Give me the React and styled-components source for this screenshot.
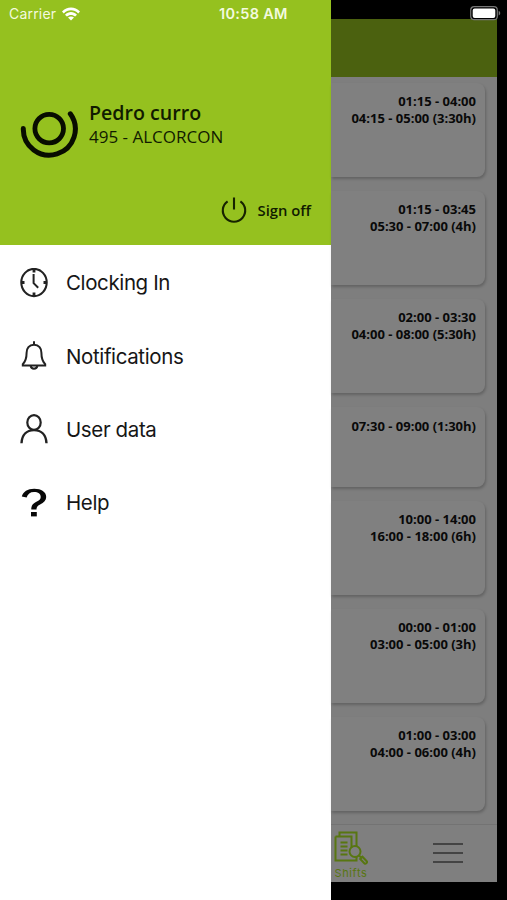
import styled, { createGlobalStyle } from 'styled-components'

const shifts = [
    { times: ['01:15 - 04:00', '04:15 - 05:00 (3:30h)'] },
    { times: ['01:15 - 03:45', '05:30 - 07:00 (4h)'] },
    { times: ['02:00 - 03:30', '04:00 - 08:00 (5:30h)'] },
    { times: ['07:30 - 09:00 (1:30h)'] },
    { times: ['10:00 - 14:00', '16:00 - 18:00 (6h)'] },
    { times: ['00:00 - 01:00', '03:00 - 05:00 (3h)'] },
    { times: ['01:00 - 03:00', '04:00 - 06:00 (4h)'] },
]

const ClockIcon = () => (
    <Icon $size={30} viewBox="0 0 30 30">
        <ellipse cx="15" cy="14.5" rx="12.7" ry="13.6" strokeWidth="2.1" />
        <path d="M14.6 6v9.2l4.600 4.600" strokeWidth="2" />
        <path d="M15 1.500v3M15 24.500v3M2.500 14.500h3M24.500 14.500h3" strokeWidth="2.800" />
    </Icon>
)

const BellIcon = () => (
    <Icon $size={30} viewBox="0 0 30 30">
        <path
            d="M15 3.800C10 3.800 7.600 7.400 7.600 11.700c0 6.300-1 8.600-3.800 11.400v1.500h22.400v-1.500c-2.800-2.800-3.800-5.100-3.800-11.400 0-4.300-2.400-7.900-7.400-7.900z"
            strokeWidth="2"
        />
        <path d="M15 .2v3.600M11.700 25c.5 3.500 6.100 3.500 6.600 0" strokeWidth="2" />
    </Icon>
)

const UserIcon = () => (
    <Icon $size={30} viewBox="0 0 30 30">
        <ellipse cx="15" cy="8.500" rx="6.700" ry="7.400" strokeWidth="2.200" />
        <path d="M2.500 29.300c.4-8.200 5-13.200 12.500-13.200s12.100 5 12.500 13.200" strokeWidth="2.400" />
    </Icon>
)

const HelpIcon = () => (
    <Icon $size={30} viewBox="0 0 30 30">
        <path
            d="M2.800 8.600C4.200 3.600 8.500.8 15.200.8c7.200 0 12 3.300 12 8.200 0 3.300-2.300 5.700-6.100 7.600-2.900 1.500-3.600 2.600-3.600 4.900h-5.200c0-4 1.500-5.900 5.100-7.800 2.900-1.500 4.300-2.600 4.300-4.800 0-3-2.500-4.900-6.700-4.900-3.900 0-6.300 1.900-7.400 5.600z"
            fill="#080808"
            stroke="none"
        />
        <path d="M12 24h5.800v4.400h-5.800z" fill="#080808" stroke="none" />
    </Icon>
)

const menu = [
    { label: 'Clocking In', icon: <ClockIcon /> },
    { label: 'Notifications', icon: <BellIcon /> },
    { label: 'User data', icon: <UserIcon /> },
    { label: 'Help', icon: <HelpIcon /> },
]

const StatusBar = () => (
    <StatusRow>
        <Carrier>Carrier</Carrier>
        <Wifi viewBox="0 0 18 13.400">
            <path d="M0 4.300C5-1.100 13-1.100 18 4.300L16.200 6.200C12.200 2 5.800 2 1.800 6.200z" />
            <path d="M3 7.400c3.400-3.600 8.600-3.600 12 0l-1.900 1.900C10.800 7 7.200 7 4.900 9.300z" />
            <path d="M6 10.300c1.700-1.600 4.300-1.600 6 0L9 13.300z" />
        </Wifi>
        <Time>10:58 AM</Time>
        <Battery viewBox="0 0 31 15">
            <rect x=".7" y=".7" width="26.600" height="13" rx="3.500" fill="#000" stroke="#777" strokeWidth="1.200" />
            <rect x="2.700" y="2.500" width="22.600" height="9.400" rx="2" fill="#fff" />
            <path d="M28.700 5v4.400c2-.6 2-3.800 0-4.400z" fill="#777" />
        </Battery>
    </StatusRow>
)

const Drawer = () => (
    <DrawerPanel>
        <Profile>
            <User>
                <Avatar viewBox="0 0 60 56">
                    <circle cx="29.200" cy="25.600" r="14.300" strokeWidth="4.800" />
                    <path d="M3.300 25.600A26 26 0 1 0 50.300 10.800" strokeWidth="5" />
                </Avatar>
                <UserText>
                    <UserName>Pedro curro</UserName>
                    <UserSite>495 - ALCORCON</UserSite>
                </UserText>
            </User>
            <SignOff>
                <Icon $size={26} viewBox="0 0 26 26">
                    <path d="M6.600 4.300a11.200 11.200 0 1 0 12.800 0M13 .5v12" stroke="#172300" strokeWidth="2.100" />
                </Icon>
                Sign off
            </SignOff>
        </Profile>
        <Menu>
            {menu.map((item) => (
                <MenuItem key={item.label}>
                    {item.icon}
                    {item.label}
                </MenuItem>
            ))}
        </Menu>
    </DrawerPanel>
)

const App = () => {
    return (
        <>
            <GlobalStyle />
            <Phone>
                <Drawer />
                <Screen>
                    <Header />
                    <ShiftList>
                        {shifts.map((shift, index) => (
                            <ShiftCard key={index} $short={shift.times.length === 1}>
                                {shift.times.map((time) => (
                                    <ShiftTime key={time}>{time}</ShiftTime>
                                ))}
                            </ShiftCard>
                        ))}
                    </ShiftList>
                    <TabBar>
                        <ShiftsTab>
                            <ShiftsIcon viewBox="0 0 34 34">
                                <path d="M5.500 5V1.500h17v14M1.500 5.500h16v11M1.500 5.500v24h17M22.500 26v3.500h-4" />
                                <path d="M6.500 11.500h7M6.500 15.500h7M6.500 19.500h7M6.500 23.500h7" strokeWidth="1.900" />
                                <circle cx="21" cy="20.500" r="5.500" />
                                <path d="M25 24.500l2.300 2.300M26.200 28l2.300-2.300 4.200 4.500c1 1.200-1 3.200-2.200 2.200z" />
                            </ShiftsIcon>
                            Shifts
                        </ShiftsTab>
                        <Burger>
                            <BurgerLine />
                            <BurgerLine />
                            <BurgerLine />
                        </Burger>
                    </TabBar>
                </Screen>
                <StatusBar />
            </Phone>
        </>
    )
}

export default App

const GlobalStyle = createGlobalStyle`
    * {
        box-sizing: border-box;
    }
    body {
        margin: 0;
        background: #000;
    }
`
const Phone = styled.div`
    position: relative;
    display: flex;
    width: 507px;
    height: 900px;
    overflow: hidden;
    background: #000;
    font-family: 'Open Sans', sans-serif;
`
const StatusRow = styled.div`
    position: absolute;
    top: 0;
    left: 0;
    width: 100%;
    height: 27px;
    display: flex;
    align-items: center;
    padding: 0 6px 0 9px;
    font-family: Inter, sans-serif;
    font-size: 14px;
    color: #f3fadf;
`
const Carrier = styled.span`
    width: 53px;
    letter-spacing: 0.2px;
`
const Wifi = styled.svg`
    width: 18px;
    height: 14px;
    fill: #fff;
`
const Time = styled.span`
    margin-left: 139px;
    font-size: 14.500px;
    font-weight: 600;
    letter-spacing: 0.300px;
    white-space: nowrap;
`
const Battery = styled.svg`
    width: 31px;
    height: 15px;
    margin-left: auto;
`
const DrawerPanel = styled.aside`
    flex: 0 0 331px;
    background: #fff;
`
const Profile = styled.div`
    height: 245px;
    padding: 100px 20px 0;
    display: flex;
    flex-direction: column;
    justify-content: space-between;
    background: #95c11f;
    color: #111b00;
`
const User = styled.div`
    display: flex;
    gap: 9px;
`
const Avatar = styled.svg`
    width: 60px;
    height: 56px;
    margin-top: 3px;
    fill: none;
    stroke: #080d00;
    stroke-linecap: round;
`
const UserText = styled.div`
    display: flex;
    flex-direction: column;
    white-space: nowrap;
`
const UserName = styled.span`
    font-size: 19.600px;
    line-height: 25px;
    font-weight: 600;
`
const UserSite = styled.span`
    font-size: 17px;
    line-height: 23px;
`
const SignOff = styled.div`
    display: flex;
    align-items: center;
    justify-content: flex-end;
    gap: 11px;
    height: 26px;
    margin-bottom: 22px;
    font-size: 14.800px;
    font-weight: 600;
`
const Icon = styled.svg`
    flex: none;
    width: ${({ $size }) => $size}px;
    height: ${({ $size }) => $size}px;
    fill: none;
    stroke: #222;
`
const Menu = styled.nav`
    display: flex;
    flex-direction: column;
    padding-top: 1px;
`
const MenuItem = styled.div`
    display: flex;
    align-items: center;
    gap: 17px;
    height: 73.400px;
    padding-left: 19px;
    font-family: Inter, sans-serif;
    font-size: 20.500px;
    letter-spacing: -0.380px;
    color: #161616;
`
const Screen = styled.main`
    display: flex;
    flex-direction: column;
    width: 166px;
    height: 863px;
    margin-top: 19px;
    background: #7e7e7e;
`
const Header = styled.header`
    flex: 0 0 58px;
    background: #4b610f;
`
const ShiftList = styled.div`
    flex: 1;
    display: flex;
    flex-direction: column;
    gap: 14px;
    padding: 6px 12px 0 0;
`
const ShiftCard = styled.div`
    flex: none;
    height: ${({ $short }) => ($short ? 80 : 94)}px;
    padding: ${({ $short }) => ($short ? 11 : 10)}px 9px 0 0;
    border-radius: 0 8px 8px 0;
    background: #808080;
    box-shadow: 1px 2px 3px rgba(0, 0, 0, 0.22);
    text-align: right;
`
const ShiftTime = styled.div`
    font-size: 13px;
    line-height: 17px;
    font-weight: 700;
    color: #090909;
    white-space: nowrap;
`
const TabBar = styled.footer`
    flex: 0 0 58px;
    display: flex;
    justify-content: space-between;
    padding: 0 34px 0 3px;
    border-top: 1px solid #737373;
    background: #7f7f7f;
`
const ShiftsTab = styled.div`
    display: flex;
    flex-direction: column;
    align-items: center;
    padding-top: 6px;
    font-family: Inter, sans-serif;
    font-size: 11px;
    line-height: 16px;
    letter-spacing: 0.600px;
    color: #587611;
`
const ShiftsIcon = styled.svg`
    width: 34px;
    height: 34px;
    fill: none;
    stroke: #587611;
    stroke-width: 2;
`
const Burger = styled.div`
    display: flex;
    flex-direction: column;
    gap: 7px;
    padding-top: 18px;
`
const BurgerLine = styled.span`
    width: 30px;
    height: 2px;
    background: #444;
`
